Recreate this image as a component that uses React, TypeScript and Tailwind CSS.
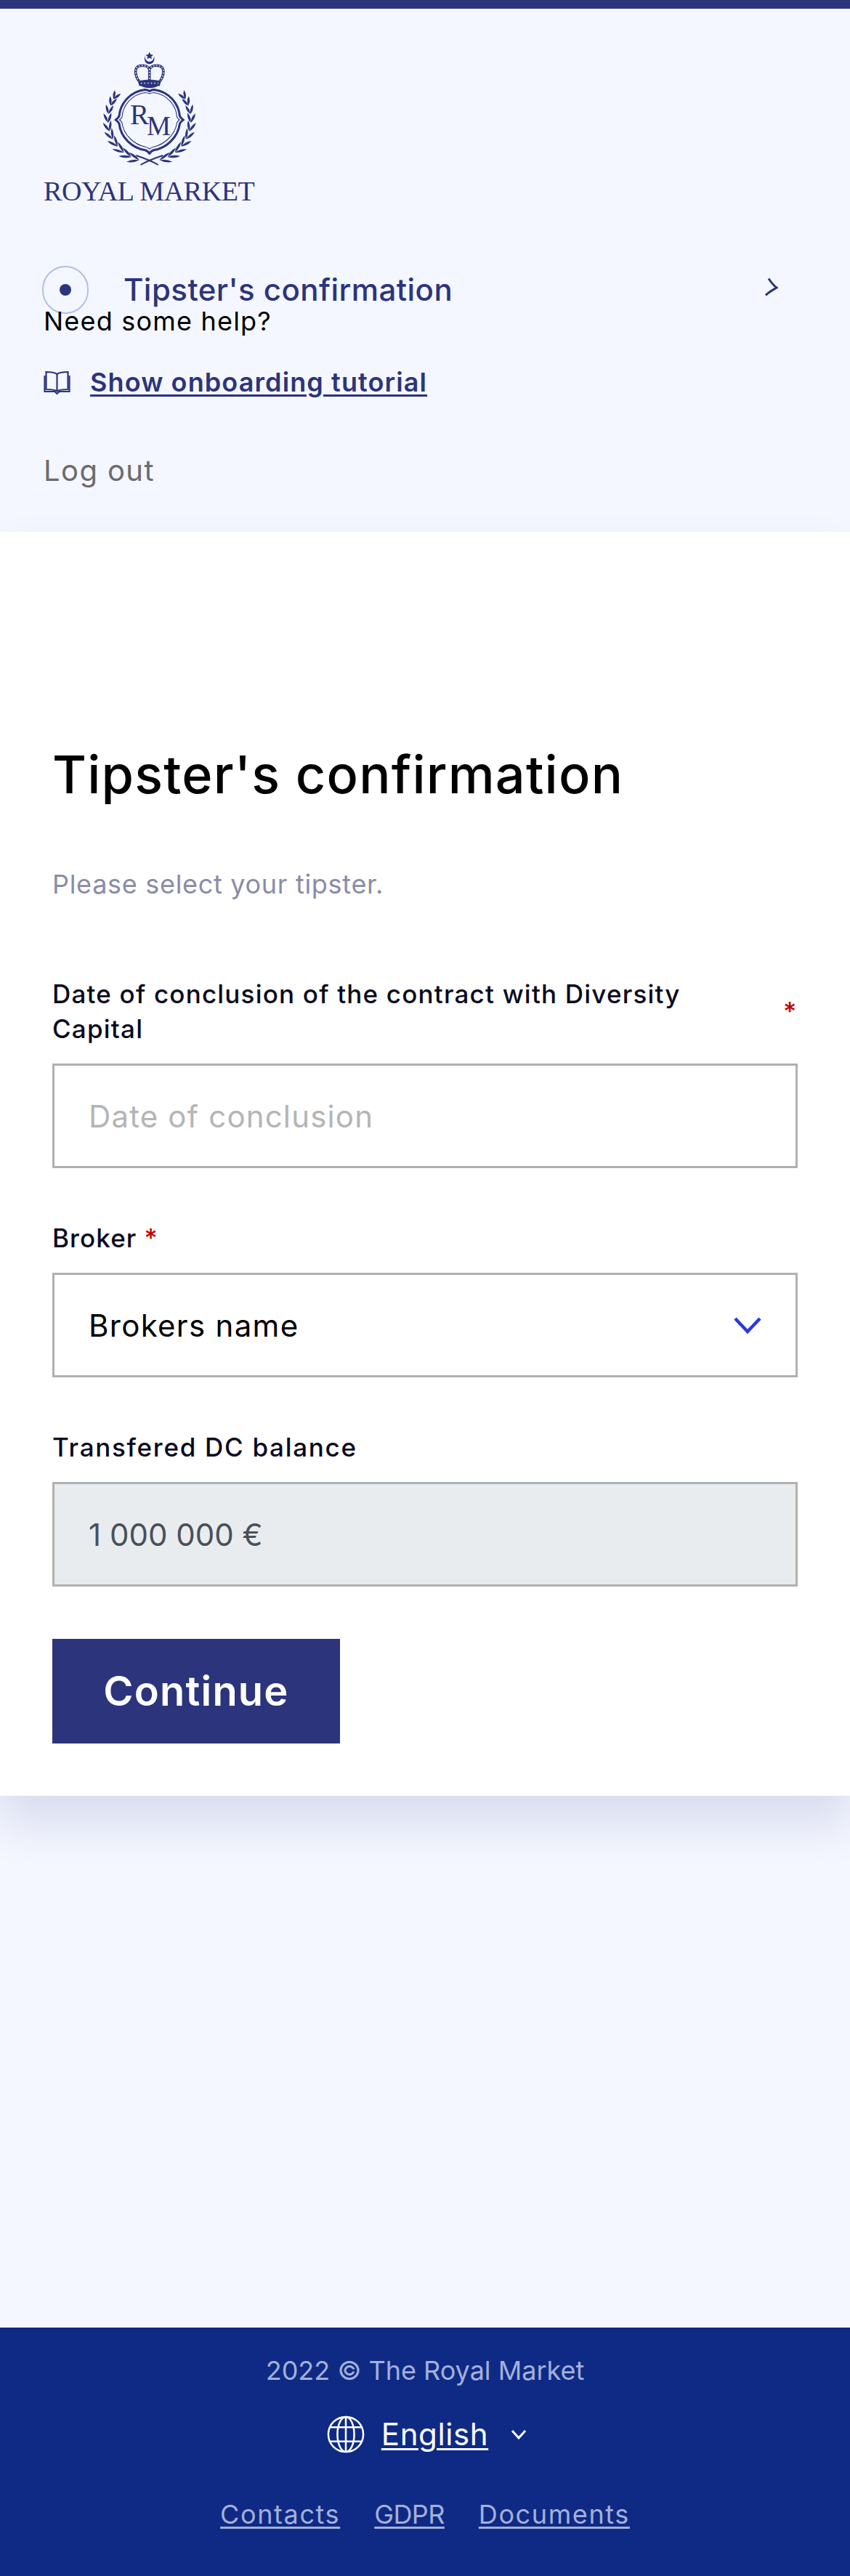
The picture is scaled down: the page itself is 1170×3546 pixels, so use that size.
import React from "react";

const NAVY = "#2c347c";

function Leaves() {
  const cx = 205.7, cy = 165, r = 57;
  const leaves: React.ReactNode[] = [];
  const angles = [104, 116, 128, 140, 152, 164, 176, 188, 200, 210];
  angles.forEach((a, i) => {
    const rad = (a * Math.PI) / 180;
    const x = cx + r * Math.cos(rad);
    const y = cy + r * Math.sin(rad);
    const tangent = a + 90;
    const L = 18 - i * 0.6;
    const d = `M0 0Q${L / 2} -3.4 ${L} 0Q${L / 2} 3.4 0 0Z`;
    leaves.push(<path key={`o${a}`} d={d} transform={`translate(${x} ${y}) rotate(${tangent + 22})`} />);
    leaves.push(<path key={`i${a}`} d={d} transform={`translate(${x} ${y}) rotate(${tangent - 22})`} />);
  });
  return <g fill={NAVY}>{leaves}</g>;
}

function Logo() {
  return (
    <svg width="132" height="164" viewBox="140 68 132 164" className="block ml-[80px]">
      <path d="M199.5 76.5C197.5 84 201 88 205.7 88.2C210.4 88 214 84 211.9 76.5C212 82 209.5 84.8 205.7 84.8C202 84.8 199.4 82 199.5 76.5Z" fill={NAVY} />
      <polygon points="205.7,71.5 207.3,75 211,75.4 208.2,77.9 209,81.5 205.7,79.6 202.4,81.5 203.2,77.9 200.4,75.4 204.1,75" fill={NAVY} />
      <g fill="none" strokeLinecap="round">
        <path d="M191.5 112C185 103 184.5 92 193 90.5C198.5 89.6 204 91 205.7 95.5C207.4 91 213 89.6 218.5 90.5C227 92 226.5 103 220 112M205.7 95.5V112" stroke={NAVY} strokeWidth="3.6" />
        <path d="M191.5 112C185 103 184.5 92 193 90.5C198.5 89.6 204 91 205.7 95.5C207.4 91 213 89.6 218.5 90.5C227 92 226.5 103 220 112M205.7 95.5V112" stroke="#f4f7ff" strokeWidth="1.5" strokeDasharray="0.6 3.4" />
      </g>
      <path d="M190 111.5C200 109 211 109 221.5 111.5L220 118C212 120 200 120 191.5 118Z" fill={NAVY} />
      <path d="M194 114.5H218" stroke="#f4f7ff" strokeWidth="1.4" strokeDasharray="1.4 3.2" />
      <path d="M195 118.5H216.5C213 122 199 122 195 118.5Z" fill={NAVY} />
      <path d="M205.7 125.5C208 124 210 123.5 212 123.5C233 126 246 143 247.5 160C249 162.5 250.5 164 252.5 165C250.5 166 249 167.5 247.5 170C245 190 228 204 212 206.5C209 207.5 207 209 205.7 211.5C204.4 209 202.4 207.5 199.4 206.5C183 204 166 190 164 170C162.5 167.5 161 166 159 165C161 164 162.5 162.5 164 160C165.5 143 178.5 126 199.4 123.5C201.4 123.5 203.4 124 205.7 125.5Z" fill="none" stroke={NAVY} strokeWidth="3" strokeLinejoin="round" />
      <path d="M205.7 129C208 128 210 127.5 212 127.5C230 130 242.5 145 243.5 161C244.5 163 245.5 164 247 165C245.5 166 244.5 167 243.5 169C241 186 226 199 212 202C209.5 202.5 207.5 203.5 205.7 205C204 203.5 202 202.5 199.4 202C185 199 170 186 168 169C167 167 166 166 164.5 165C166 164 167 163 168 161C169 145 181.5 130 199.4 127.5C201.4 127.5 203.4 128 205.7 129Z" fill="none" stroke={NAVY} strokeWidth="1.1" />
      <text x="179" y="171" fontFamily="'Liberation Serif',serif" fontSize="39" fill={NAVY}>R</text>
      <text x="202" y="186" fontFamily="'Liberation Serif',serif" fontSize="37" fill={NAVY}>M</text>
      <Leaves />
      <g transform="translate(411.4 0) scale(-1 1)">
        <Leaves />
      </g>
      <path d="M193.5 227C202 222 212 218 224 214M217.9 227C209.4 222 199.4 218 187.4 214" fill="none" stroke={NAVY} strokeWidth="2" />
    </svg>
  );
}

function BookIcon() {
  return (
    <svg width="37" height="33" viewBox="0 0 37 33" fill="none" stroke={NAVY} strokeWidth="2.2" className="shrink-0">
      <path d="M18.5 5C15 2.6 9 2 3.5 2V26C9 26 15 26 18.5 28.5C22 26 28 26 33.5 26V2C28 2 22 2.6 18.5 5V28.5" />
      <path d="M1.5 7V29H15.5L18.5 32L21.5 29H35.5V7" />
    </svg>
  );
}

function Globe() {
  return (
    <svg width="52" height="52" viewBox="0 0 54 54" fill="none" stroke="#fff" strokeWidth="2.6" className="shrink-0 ml-[6px]">
      <circle cx="27" cy="27" r="25" />
      <ellipse cx="27" cy="27" rx="12" ry="25" />
      <path d="M27 2V52M5 17H49M5 37H49" />
    </svg>
  );
}

function Field({ label, required, wrap, labelTracking, children }: { label: string; required?: boolean; wrap?: boolean; labelTracking: string; children: React.ReactNode }) {
  return (
    <div className="mb-[72px]">
      <div className={`flex mb-[24px] text-[35px] leading-[48px] font-medium text-[#0a0a1e] ${labelTracking} ${wrap ? "items-center justify-between" : "items-start gap-[10px]"}`}>
        <span className={wrap ? "w-[900px]" : ""}>{label}</span>
        {required && <span className={`text-[#c40000] w-[16px] shrink-0 ${wrap ? "mr-[4px]" : ""}`}>*</span>}
      </div>
      {children}
    </div>
  );
}

export default function App() {
  return (
    <div className="min-h-[3546px] flex flex-col bg-[#f4f7ff] font-['Inter',sans-serif]">
      <div className="h-[12px] bg-[#2c347c]" />
      <header className="px-[60px] pt-[56px]">
        <Logo />
        <div className="mt-[8px] font-['Liberation_Serif',serif] text-[38px] leading-[46px] tracking-[-0.4px] text-[#2c347c] whitespace-nowrap">
          ROYAL MARKET
        </div>
        <div className="mt-[80px] h-[49px] flex items-start">
          <div className="-ml-[2px] w-[64px] h-[66px] shrink-0 rounded-full border-2 border-[#b3bee6] flex items-center justify-center relative z-0">
            <div className="w-[16px] h-[16px] rounded-full bg-[#2c347c]" />
          </div>
          <div className="ml-[48px] h-[66px] flex-1 flex items-center text-[42px] tracking-[0.45px] font-medium text-[#2c347c] leading-none">
            Tipster's confirmation
          </div>
          <svg width="22" height="28" viewBox="0 0 22 28" fill="none" stroke="#2c347c" strokeWidth="3" className="mt-[15px] mr-[38px]">
            <path d="M8 2.5C11 7 15 12 19 15C14 18 8 21 4 25.5" />
          </svg>
        </div>
        <div className="relative text-[36px] leading-[54px] tracking-[1.2px] text-black">Need some help?</div>
        <div className="mt-[30px] flex items-center gap-[27px]">
          <BookIcon />
          <a className="text-[36px] leading-[54px] tracking-[1.1px] font-semibold text-[#2c347c] underline decoration-[3px] underline-offset-[4px]">Show onboarding tutorial</a>
        </div>
        <div className="mt-[65px] text-[40px] leading-[60px] tracking-[1.4px] text-[#6b6b6b]">Log out</div>
      </header>

      <main className="mt-[54px] bg-white px-[72px] pt-[280px] pb-0 shadow-[0_36px_60px_rgba(44,52,124,0.14)]">
        <h1 className="text-[72px] leading-[108px] tracking-[1.2px] font-medium text-black">Tipster's confirmation</h1>
        <p className="mt-[70px] mb-[100px] text-[36px] leading-[54px] tracking-[0.7px] text-[#8a8ca8]">Please select your tipster.</p>

        <Field label="Date of conclusion of the contract with Diversity Capital" required wrap labelTracking="tracking-[1.2px]">
          <div className="h-[144px] border-[3px] border-[#b0b0b0] bg-white flex items-center pl-[47px] text-[42px] tracking-[1.15px] text-[#b5b5b5]">Date of conclusion</div>
        </Field>
        <Field label="Broker" required labelTracking="tracking-[1.1px]">
          <div className="h-[144px] border-[3px] border-[#b0b0b0] bg-white flex items-center justify-between pl-[47px] pr-[46px] text-[42px] tracking-[1.3px] text-black">
            <span>Brokers name</span>
            <svg width="40" height="24" viewBox="0 0 40 24" fill="none" stroke="#2a3bd8" strokeWidth="4.5">
              <path d="M3 3L20 21L37 3" />
            </svg>
          </div>
        </Field>
        <Field label="Transfered DC balance" labelTracking="tracking-[1.7px]">
          <div className="h-[144px] border-[3px] border-[#b0b0b0] bg-[#e9ecef] flex items-center pl-[47px] text-[42px] text-[#495057]">1 000 000 €</div>
        </Field>
        <button className="block w-[396px] h-[144px] mb-[72px] bg-[#2c347c] text-white text-[56px] tracking-[1.2px] font-semibold">Continue</button>
      </main>

      <footer className="mt-auto h-[342px] bg-[#0f2a85] flex flex-col items-center">
        <div className="mt-[32px] text-[36px] leading-[54px] text-[#a3b0da]">2022 © The Royal Market</div>
        <div className="mt-[29px] flex items-center text-white">
          <Globe />
          <a className="ml-[23px] text-[42px] leading-[63px] tracking-[0.6px] underline decoration-[3px] underline-offset-[4px]">English</a>
          <svg width="24" height="16" viewBox="0 0 24 16" fill="none" stroke="#fff" strokeWidth="3" className="ml-[30px]">
            <path d="M3 3L12 13L21 3" />
          </svg>
        </div>
        <div className="mt-[52px] flex gap-[47px] text-[36px] leading-[54px] text-[#a3b0da]">
          <a className="tracking-[1.6px] underline decoration-[3px] underline-offset-[4px]">Contacts</a>
          <a className="tracking-[-0.6px] underline decoration-[3px] underline-offset-[4px]">GDPR</a>
          <a className="tracking-[1.6px] underline decoration-[3px] underline-offset-[4px]">Documents</a>
        </div>
      </footer>
    </div>
  );
}
